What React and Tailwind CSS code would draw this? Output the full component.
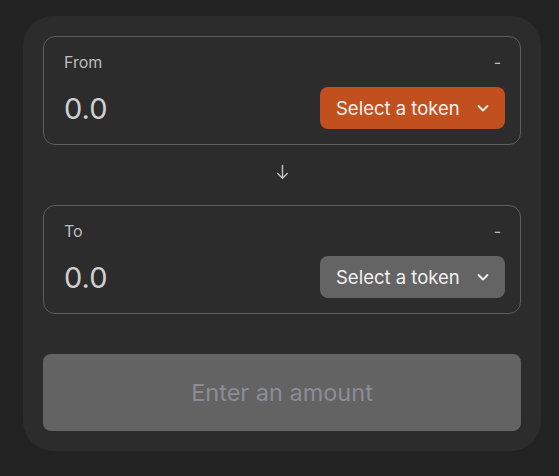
import React from "react";

function Chevron() {
  return (
    <svg width="14" height="14" viewBox="0 0 14 14" fill="none" className="shrink-0">
      <path d="M2.5 5 L7 9.5 L11.5 5" stroke="currentColor" strokeWidth="1.8" strokeLinecap="round" strokeLinejoin="round" />
    </svg>
  );
}

function TokenBox({ label, accent }) {
  return (
    <div className="rounded-[12px] border border-[#5e5e5e] pl-[20px] pr-[15px] py-[15px]">
      <div className="flex items-center justify-between h-[20px] leading-[20px] text-[16px] text-[#bdbdbd]">
        <span>{label}</span>
        <span className="pr-[4px]">-</span>
      </div>
      <div className="mt-[15px] flex h-[42px] items-center justify-between">
        <span className="text-[29px] leading-none text-[#cfcfcf]">0.0</span>
        <button
          className={
            "flex h-[42px] w-[185px] items-center justify-between rounded-[8px] pl-[16px] pr-[15px] text-[18.5px] leading-none text-[#f1f1f1] " +
            (accent ? "bg-[#c2501f]" : "bg-[#646464]")
          }
        >
          <span>Select a token</span>
          <Chevron />
        </button>
      </div>
    </div>
  );
}

export default function App() {
  return (
    <div
      className="min-h-[476px] w-full bg-[#222222] pt-[16px] pl-[23px]"
      style={{ fontFamily: "Inter, 'Noto Sans', sans-serif" }}
    >
      <div className="w-[518px] rounded-[30px] bg-[#2c2c2c] p-[20px]">
        <TokenBox label="From" accent />
        <div className="flex h-[60px] items-center justify-center pb-[6px] text-[#bdbdbd]">
          <svg width="17" height="17" viewBox="0 0 16 16" fill="none">
            <path d="M8 1.5 V13.5 M3.5 9 L8 13.5 L12.5 9" stroke="currentColor" strokeWidth="1.4" strokeLinecap="round" strokeLinejoin="round" />
          </svg>
        </div>
        <TokenBox label="To" />
        <button className="mt-[40px] flex h-[77px] w-full items-center justify-center rounded-[8px] bg-[#636363] text-[23.5px] leading-none text-[#8c8c97]">
          Enter an amount
        </button>
      </div>
    </div>
  );
}
